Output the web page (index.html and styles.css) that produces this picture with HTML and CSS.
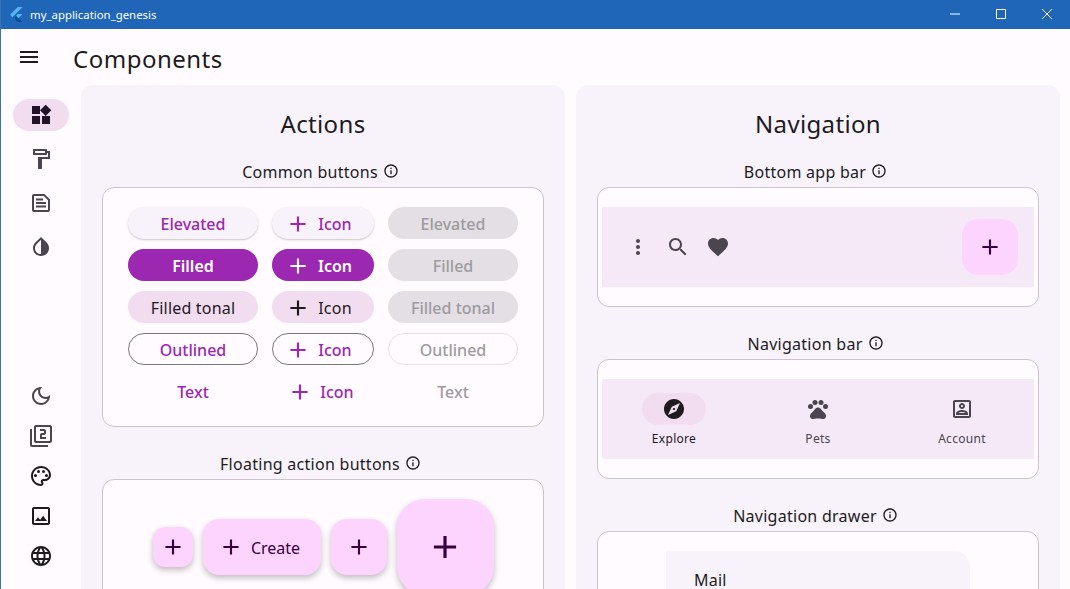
FILE: index.html
```html
<!DOCTYPE html>
<html lang="en">
<head>
  <meta charset="UTF-8">
  <title>my_application_genesis</title>
  <meta name="viewport" content="width=device-width, initial-scale=1.0">
  <link rel="stylesheet" href="styles.css">
</head>
<body>
  <svg class="sprite" xmlns="http://www.w3.org/2000/svg">
    <symbol id="i-menu" viewBox="0 0 24 24"><path d="M3 18h18v-2H3v2zm0-5h18v-2H3v2zm0-7v2h18V6H3z"/></symbol>
    <symbol id="i-add" viewBox="0 0 24 24"><path d="M19 13h-6v6h-2v-6H5v-2h6V5h2v6h6v2z"/></symbol>
    <symbol id="i-info" viewBox="0 0 24 24"><path d="M11 7h2v2h-2zm0 4h2v6h-2zm1-9C6.48 2 2 6.48 2 12s4.48 10 10 10 10-4.48 10-10S17.52 2 12 2zm0 18c-4.41 0-8-3.59-8-8s3.59-8 8-8 8 3.59 8 8-3.59 8-8 8z"/></symbol>
    <symbol id="i-widgets" viewBox="0 0 24 24"><path d="M13 13v8h8v-8h-8zM3 21h8v-8H3v8zM3 3v8h8V3H3zm13.66-1.31L11 7.34 16.66 13l5.66-5.66-5.66-5.65z"/></symbol>
    <symbol id="i-paint" viewBox="0 0 24 24"><path d="M18 4V3c0-.55-.45-1-1-1H5c-.55 0-1 .45-1 1v4c0 .55.45 1 1 1h12c.55 0 1-.45 1-1V6h1v4H9v11c0 .55.45 1 1 1h2c.55 0 1-.45 1-1v-9h8V4h-3zm-2 2H6V4h10v2z"/></symbol>
    <symbol id="i-article" viewBox="0 0 24 24"><path fill-rule="evenodd" d="M5 3h10.5L21 8.5V19c0 1.1-.9 2-2 2H5c-1.1 0-2-.9-2-2V5c0-1.1.9-2 2-2zm0 2v14h14V9.3L14.7 5H5z"/><path d="M7 7.5h7v2H7zm0 3.5h10v2H7zm0 3.5h10v2H7z"/></symbol>
    <symbol id="i-invert" viewBox="0 0 24 24"><path fill-rule="evenodd" d="M12 4.81V19c-3.31 0-6-2.63-6-5.87 0-1.56.62-3.03 1.75-4.14L12 4.81M6.35 7.56C4.9 8.99 4 10.96 4 13.13 4 17.48 7.58 21 12 21s8-3.52 8-7.87c0-2.17-.9-4.14-2.35-5.57L12 2 6.35 7.56z"/></symbol>
    <symbol id="i-moon" viewBox="0 0 24 24"><path d="M9.37 5.51c-.18.64-.27 1.31-.27 1.99 0 4.08 3.32 7.4 7.4 7.4.68 0 1.35-.09 1.99-.27C17.45 17.19 14.93 19 12 19c-3.86 0-7-3.14-7-7 0-2.93 1.81-5.45 4.37-6.49zM12 3c-4.97 0-9 4.03-9 9s4.03 9 9 9 9-4.03 9-9c0-.46-.04-.92-.1-1.36-.98 1.37-2.58 2.26-4.4 2.26-2.98 0-5.4-2.42-5.4-5.4 0-1.81.89-3.42 2.26-4.4-.44-.06-.9-.1-1.36-.1z"/></symbol>
    <symbol id="i-filter2" viewBox="0 0 24 24"><path d="M3 5H1v16c0 1.1.9 2 2 2h16v-2H3V5zm18-4H7c-1.1 0-2 .9-2 2v14c0 1.1.9 2 2 2h14c1.1 0 2-.9 2-2V3c0-1.1-.9-2-2-2zm0 16H7V3h14v14zm-4-4h-4v-2h2c1.1 0 2-.89 2-2V7c0-1.11-.9-2-2-2h-4v2h4v2h-2c-1.1 0-2 .89-2 2v4h6v-2z"/></symbol>
    <symbol id="i-palette" viewBox="0 0 24 24"><path d="M12 22C6.49 22 2 17.51 2 12S6.49 2 12 2s10 4.04 10 9c0 3.31-2.69 6-6 6h-1.77c-.28 0-.5.22-.5.5 0 .12.05.23.13.33.41.47.64 1.06.64 1.67 0 1.38-1.12 2.5-2.5 2.5zm0-18c-4.41 0-8 3.59-8 8s3.59 8 8 8c.28 0 .5-.22.5-.5 0-.16-.08-.28-.14-.35-.41-.46-.63-1.05-.63-1.65 0-1.38 1.12-2.5 2.5-2.5H16c2.21 0 4-1.79 4-4 0-3.86-3.59-7-8-7z"/><circle cx="6.5" cy="11.5" r="1.5"/><circle cx="9.5" cy="7.5" r="1.5"/><circle cx="14.5" cy="7.5" r="1.5"/><circle cx="17.5" cy="11.5" r="1.5"/></symbol>
    <symbol id="i-image" viewBox="0 0 24 24"><path d="M19 5v14H5V5h14m0-2H5c-1.1 0-2 .9-2 2v14c0 1.1.9 2 2 2h14c1.1 0 2-.9 2-2V5c0-1.1-.9-2-2-2zm-4.86 8.86l-3 3.87L9 13.14 6 17h12l-3.86-5.14z"/></symbol>
    <symbol id="i-globe" viewBox="0 0 24 24"><path d="M11.99 2C6.47 2 2 6.48 2 12s4.47 10 9.99 10C17.52 22 22 17.52 22 12S17.52 2 11.99 2zm6.93 6h-2.95c-.32-1.25-.78-2.45-1.38-3.56 1.84.63 3.37 1.91 4.33 3.56zM12 4.04c.83 1.2 1.48 2.53 1.91 3.96h-3.82c.43-1.43 1.08-2.76 1.91-3.96zM4.26 14C4.1 13.36 4 12.69 4 12s.1-1.36.26-2h3.38c-.08.66-.14 1.32-.14 2s.06 1.34.14 2H4.26zm.82 2h2.95c.32 1.25.78 2.45 1.38 3.56-1.84-.63-3.37-1.9-4.33-3.56zm2.95-8H5.08c.96-1.66 2.49-2.93 4.33-3.56C8.81 5.55 8.35 6.75 8.03 8zM12 19.96c-.83-1.2-1.48-2.53-1.91-3.96h3.82c-.43 1.43-1.08 2.76-1.91 3.96zM14.34 14H9.66c-.09-.66-.16-1.32-.16-2s.07-1.35.16-2h4.68c.09.65.16 1.32.16 2s-.07 1.34-.16 2zm.25 5.56c.6-1.11 1.06-2.31 1.38-3.56h2.95c-.96 1.65-2.49 2.93-4.33 3.56zM16.36 14c.08-.66.14-1.32.14-2s-.06-1.34-.14-2h3.38c.16.64.26 1.31.26 2s-.1 1.36-.26 2h-3.38z"/></symbol>
    <symbol id="i-more" viewBox="0 0 24 24"><path d="M12 8c1.1 0 2-.9 2-2s-.9-2-2-2-2 .9-2 2 .9 2 2 2zm0 2c-1.1 0-2 .9-2 2s.9 2 2 2 2-.9 2-2-.9-2-2-2zm0 6c-1.1 0-2 .9-2 2s.9 2 2 2 2-.9 2-2-.9-2-2-2z"/></symbol>
    <symbol id="i-search" viewBox="0 0 24 24"><path d="M15.5 14h-.79l-.28-.27C15.41 12.59 16 11.11 16 9.5 16 5.91 13.09 3 9.5 3S3 5.91 3 9.5 5.91 16 9.5 16c1.61 0 3.09-.59 4.23-1.57l.27.28v.79l5 4.99L20.49 19l-4.99-5zm-6 0C7.01 14 5 11.99 5 9.5S7.01 5 9.5 5 14 7.01 14 9.5 11.99 14 9.5 14z"/></symbol>
    <symbol id="i-heart" viewBox="0 0 24 24"><path d="M12 21.35l-1.45-1.32C5.4 15.36 2 12.28 2 8.5 2 5.42 4.42 3 7.5 3c1.74 0 3.41.81 4.5 2.09C13.09 3.81 14.76 3 16.5 3 19.58 3 22 5.42 22 8.5c0 3.78-3.4 6.86-8.55 11.54L12 21.35z"/></symbol>
    <symbol id="i-explore" viewBox="0 0 24 24"><path d="M12 10.9c-.61 0-1.1.49-1.1 1.1s.49 1.1 1.1 1.1c.61 0 1.1-.49 1.1-1.1s-.49-1.1-1.1-1.1zM12 2C6.48 2 2 6.48 2 12s4.48 10 10 10 10-4.48 10-10S17.52 2 12 2zm2.19 12.19L6 18l3.81-8.19L18 6l-3.81 8.19z"/></symbol>
    <symbol id="i-pets" viewBox="0 0 24 24"><circle cx="4.5" cy="9.5" r="2.5"/><circle cx="9" cy="5.5" r="2.5"/><circle cx="15" cy="5.5" r="2.5"/><circle cx="19.5" cy="9.5" r="2.5"/><path d="M17.34 14.86c-.87-1.02-1.6-1.89-2.48-2.91-.46-.54-1.05-1.08-1.75-1.32-.11-.04-.22-.07-.33-.09-.25-.04-.52-.04-.78-.04s-.53 0-.79.05c-.11.02-.22.05-.33.09-.7.24-1.28.78-1.75 1.32-.87 1.02-1.6 1.89-2.48 2.91-1.31 1.31-2.92 2.76-2.62 4.79.29 1.02 1.02 2.03 2.33 2.32.73.15 3.06-.44 5.54-.44h.18c2.48 0 4.81.58 5.54.44 1.31-.29 2.04-1.31 2.33-2.32.31-2.04-1.3-3.49-2.61-4.8z"/></symbol>
    <symbol id="i-account" viewBox="0 0 24 24"><path d="M19 5v14H5V5h14m0-2H5c-1.11 0-2 .9-2 2v14c0 1.1.89 2 2 2h14c1.1 0 2-.9 2-2V5c0-1.1-.9-2-2-2zm-7 9c-1.65 0-3-1.35-3-3s1.35-3 3-3 3 1.35 3 3-1.35 3-3 3zm0-4c-.55 0-1 .45-1 1s.45 1 1 1 1-.45 1-1-.45-1-1-1zm6 10H6v-1.53c0-2.5 3.97-3.58 6-3.58s6 1.08 6 3.58V18zm-9.69-2h7.38c-.69-.56-2.38-1.12-3.69-1.12s-3.01.56-3.69 1.12z"/></symbol>
  </svg>

  <div class="window">
    <header class="titlebar">
      <svg class="app-logo" viewBox="0 0 14 16" width="13" height="15">
        <path fill="#54b4ef" d="M8.5 0L0 8.3l2.6 2.6L13.6 0z"/>
        <path fill="#54b4ef" d="M13.6 7.4H8.5L4 11.9l2.5 2.5z"/>
        <path fill="#0a4f96" d="M6.5 14.4L4 11.9l2.5-2.5 2.6 2.5 4.5 4.1H8.5z"/>
      </svg>
      <span class="app-name">my_application_genesis</span>
      <div class="win-buttons">
        <span class="win-btn"><svg viewBox="0 0 10 10" width="10" height="10"><path d="M0 5h10"/></svg></span>
        <span class="win-btn"><svg viewBox="0 0 10 10" width="10" height="10"><path d="M.5.5h9v9h-9z"/></svg></span>
        <span class="win-btn"><svg viewBox="0 0 10 10" width="10" height="10"><path d="M0 0l10 10M10 0L0 10"/></svg></span>
      </div>
    </header>

    <div class="appbar">
      <span class="appbar-menu"><svg class="icon"><use href="#i-menu"/></svg></span>
      <h1>Components</h1>
    </div>

    <div class="content">
      <nav class="rail">
        <div class="rail-group">
          <a class="rail-item selected"><span class="rail-pill"><svg class="icon"><use href="#i-widgets"/></svg></span></a>
          <a class="rail-item"><svg class="icon"><use href="#i-paint"/></svg></a>
          <a class="rail-item"><svg class="icon"><use href="#i-article"/></svg></a>
          <a class="rail-item"><svg class="icon"><use href="#i-invert"/></svg></a>
        </div>
        <div class="rail-group tools">
          <a class="rail-item"><svg class="icon"><use href="#i-moon"/></svg></a>
          <a class="rail-item"><svg class="icon"><use href="#i-filter2"/></svg></a>
          <a class="rail-item dark"><svg class="icon"><use href="#i-palette"/></svg></a>
          <a class="rail-item dark"><svg class="icon"><use href="#i-image"/></svg></a>
          <a class="rail-item dark"><svg class="icon"><use href="#i-globe"/></svg></a>
        </div>
      </nav>

      <main class="columns">
        <section class="card">
          <h2>Actions</h2>

          <div class="section">
            <h3>Common buttons <svg class="info"><use href="#i-info"/></svg></h3>
            <div class="box">
              <div class="button-grid">
                <button class="btn elevated">Elevated</button>
                <button class="btn elevated with-icon"><svg class="icon"><use href="#i-add"/></svg>Icon</button>
                <button class="btn disabled">Elevated</button>

                <button class="btn filled">Filled</button>
                <button class="btn filled with-icon"><svg class="icon"><use href="#i-add"/></svg>Icon</button>
                <button class="btn disabled">Filled</button>

                <button class="btn tonal">Filled tonal</button>
                <button class="btn tonal with-icon"><svg class="icon"><use href="#i-add"/></svg>Icon</button>
                <button class="btn disabled">Filled tonal</button>

                <button class="btn outlined">Outlined</button>
                <button class="btn outlined with-icon"><svg class="icon"><use href="#i-add"/></svg>Icon</button>
                <button class="btn outlined off">Outlined</button>

                <button class="btn text">Text</button>
                <button class="btn text with-icon"><svg class="icon"><use href="#i-add"/></svg>Icon</button>
                <button class="btn text off">Text</button>
              </div>
            </div>
          </div>

          <div class="section">
            <h3>Floating action buttons <svg class="info"><use href="#i-info"/></svg></h3>
            <div class="box">
              <div class="fab-row">
                <button class="fab small"><svg class="icon"><use href="#i-add"/></svg></button>
                <button class="fab extended"><svg class="icon"><use href="#i-add"/></svg><span class="fab-label">Create</span></button>
                <button class="fab"><svg class="icon"><use href="#i-add"/></svg></button>
                <button class="fab large"><svg class="icon"><use href="#i-add"/></svg></button>
              </div>
            </div>
          </div>
        </section>

        <section class="card">
          <h2>Navigation</h2>

          <div class="section">
            <h3>Bottom app bar <svg class="info"><use href="#i-info"/></svg></h3>
            <div class="box bar-box">
              <div class="bottom-bar">
                <span class="bar-action"><svg class="icon"><use href="#i-more"/></svg></span>
                <span class="bar-action"><svg class="icon"><use href="#i-search"/></svg></span>
                <span class="bar-action"><svg class="icon"><use href="#i-heart"/></svg></span>
                <button class="fab flat"><svg class="icon"><use href="#i-add"/></svg></button>
              </div>
            </div>
          </div>

          <div class="section">
            <h3>Navigation bar <svg class="info"><use href="#i-info"/></svg></h3>
            <div class="box bar-box">
              <div class="nav-bar">
                <a class="nav-item selected"><span class="nav-pill"><svg class="icon"><use href="#i-explore"/></svg></span>Explore</a>
                <a class="nav-item"><span class="nav-pill"><svg class="icon"><use href="#i-pets"/></svg></span>Pets</a>
                <a class="nav-item"><span class="nav-pill"><svg class="icon"><use href="#i-account"/></svg></span>Account</a>
              </div>
            </div>
          </div>

          <div class="section">
            <h3>Navigation drawer <svg class="info"><use href="#i-info"/></svg></h3>
            <div class="box">
              <div class="drawer">
                <div class="drawer-title">Mail</div>
              </div>
            </div>
          </div>
        </section>
      </main>
    </div>
  </div>
</body>
</html>
```

FILE: styles.css
```css
:root {
  --bg: #fffbfe;
  --panel: #f8f2fa;
  --text: #1d1b1e;
  --icon: #4a454e;
  --primary: #9c27b0;
  --tonal: #f2dcef;
  --fab: #fdd4fe;
  --on-fab: #37003f;
  --border: #cbc4cf;
  --bar: #f5e9f8;
  --disabled-bg: #e3dfe4;
  --disabled-text: #9e9a9f;
}

* {
  box-sizing: border-box;
  font-family: "Noto Sans", "Open Sans", sans-serif;
}

html, body {
  margin: 0;
  height: 100%;
  overflow: hidden;
}

.sprite {
  display: none;
}

.icon {
  width: 24px;
  height: 24px;
  fill: currentColor;
  flex: none;
}

.window {
  height: 100vh;
  display: flex;
  flex-direction: column;
  background: var(--bg);
  color: var(--text);
  border-left: 1px solid #3a74ad;
  overflow: hidden;
}

/* title bar */
.titlebar {
  flex: none;
  height: 29px;
  margin-left: -1px;
  display: flex;
  align-items: center;
  background: #2066b8;
  color: #fff;
  padding-left: 10px;
}

.app-logo {
  flex: none;
}

.app-name {
  margin: -1px 0 0 7px;
  font-size: 11.4px;
}

.win-buttons {
  margin-left: auto;
  display: flex;
}

.win-btn {
  width: 46px;
  height: 27px;
  margin-bottom: 2px;
  display: flex;
  align-items: center;
  justify-content: center;
}

.win-btn svg {
  fill: none;
  stroke: #fff;
  stroke-width: 1;
}

/* app bar */
.appbar {
  flex: none;
  height: 56px;
  display: flex;
  align-items: center;
  padding-left: 16px;
}

.appbar-menu {
  width: 24px;
  height: 24px;
  margin-top: -1px;
}

h1 {
  margin: 4px 0 0 32px;
  font-size: 24px;
  font-weight: 400;
  line-height: 32px;
  letter-spacing: 0.5px;
}

/* layout below the app bar */
.content {
  flex: 1;
  min-height: 0;
  display: flex;
}

.rail {
  flex: none;
  width: 80px;
  display: flex;
  flex-direction: column;
  justify-content: space-between;
  padding: 8px 0 13px;
  color: var(--icon);
}

.rail-group {
  display: flex;
  flex-direction: column;
}

.rail-item {
  height: 44px;
  display: flex;
  align-items: center;
  justify-content: center;
}

.tools .rail-item {
  height: 40px;
}

.rail-item.dark {
  color: var(--text);
}

.rail-pill {
  width: 56px;
  height: 32px;
  border-radius: 16px;
  background: var(--tonal);
  color: #21122a;
  display: flex;
  align-items: center;
  justify-content: center;
}

.columns {
  flex: 1;
  min-width: 0;
  display: flex;
  gap: 11px;
  padding-right: 10px;
}

.card {
  flex: 1 1 0;
  min-width: 0;
  background: var(--panel);
  border-radius: 12px 12px 0 0;
  padding: 23px 21px 0;
}

h2 {
  margin: 0 0 20px;
  font-size: 24px;
  font-weight: 400;
  line-height: 32px;
  text-align: center;
  letter-spacing: 0.35px;
}

.section {
  margin-bottom: 25px;
}

h3 {
  margin: 0 0 3px;
  height: 24px;
  padding-right: 5px;
  font-size: 16px;
  font-weight: 400;
  line-height: 24px;
  letter-spacing: 0.27px;
  display: flex;
  align-items: center;
  justify-content: center;
  gap: 5px;
}

.info {
  width: 16px;
  height: 16px;
  fill: currentColor;
  margin-top: -2px;
}

.box {
  background: var(--bg);
  border: 1px solid var(--border);
  border-radius: 12px;
  padding: 19px 4px;
}

/* common buttons */
.button-grid {
  display: grid;
  grid-template-columns: 130px 102px 130px;
  grid-auto-rows: 32px;
  gap: 10px 14px;
  justify-content: center;
}

.btn {
  border: none;
  border-radius: 16px;
  background: none;
  font-size: 16px;
  font-weight: 500;
  padding: 2px 0 0;
  display: flex;
  align-items: center;
  justify-content: center;
  gap: 8px;
  color: var(--primary);
}

.btn .icon,
.fab .icon {
  width: 26px;
  height: 26px;
  margin: -1px;
}

.btn.with-icon {
  padding-right: 8px;
}

.btn.text.with-icon {
  padding-right: 4px;
}

.btn.elevated {
  background: var(--panel);
  box-shadow: 0 1px 2px rgba(0, 0, 0, 0.22);
}

.btn.filled {
  background: var(--primary);
  color: #fff;
  font-weight: 600;
}

.btn.tonal {
  background: var(--tonal);
  color: var(--text);
  font-weight: 400;
  letter-spacing: 0.2px;
}

.btn.outlined {
  background: transparent;
  border: 1px solid #7b757f;
}

.btn.disabled {
  background: var(--disabled-bg);
  color: var(--disabled-text);
}

.btn.outlined.off {
  border-color: #e6e1e6;
  color: var(--disabled-text);
}

.btn.text.off {
  color: var(--disabled-text);
}

/* floating action buttons */
.fab-row {
  display: flex;
  align-items: center;
  justify-content: center;
  gap: 10px;
}

.fab {
  flex: none;
  width: 56px;
  height: 56px;
  border: none;
  border-radius: 16px;
  padding: 0;
  background: var(--fab);
  color: var(--on-fab);
  font-size: 16px;
  font-weight: 400;
  display: flex;
  align-items: center;
  justify-content: center;
  box-shadow: 0 3px 6px rgba(0, 0, 0, 0.25);
}

.fab.small {
  width: 40px;
  height: 40px;
  border-radius: 12px;
}

.fab.extended {
  width: 118px;
  gap: 8px;
  padding-right: 4px;
}

.fab-label {
  margin-top: 2px;
}

.fab.large {
  width: 97px;
  height: 96px;
  border-radius: 28px;
}

.fab.large .icon {
  width: 38px;
  height: 38px;
  margin: 0;
}

.fab.flat {
  box-shadow: none;
  margin-left: auto;
}

/* bars on the right */
.bottom-bar {
  height: 80px;
  background: var(--bar);
  display: flex;
  align-items: center;
  padding: 0 16px;
  color: var(--icon);
}

.bar-action {
  width: 40px;
  height: 40px;
  display: flex;
  align-items: center;
  justify-content: center;
}

.nav-bar {
  height: 80px;
  background: var(--bar);
  display: flex;
  color: var(--icon);
}

.nav-item {
  flex: 1;
  display: flex;
  flex-direction: column;
  align-items: center;
  padding-top: 14px;
  font-size: 12px;
  font-weight: 400;
  line-height: 16px;
  letter-spacing: 0.3px;
  gap: 6px;
}

.nav-pill {
  width: 64px;
  height: 32px;
  border-radius: 16px;
  display: flex;
  align-items: center;
  justify-content: center;
}

.nav-item.selected {
  color: var(--text);
}

.nav-item.selected .nav-pill {
  background: var(--tonal);
}

.drawer {
  width: 304px;
  height: 200px;
  margin: 0 auto;
  background: var(--panel);
  border-radius: 0 16px 16px 0;
  padding: 20px 28px;
}

.drawer-title {
  font-size: 16px;
  font-weight: 400;
  line-height: 18px;
  letter-spacing: 0.2px;
}
```
